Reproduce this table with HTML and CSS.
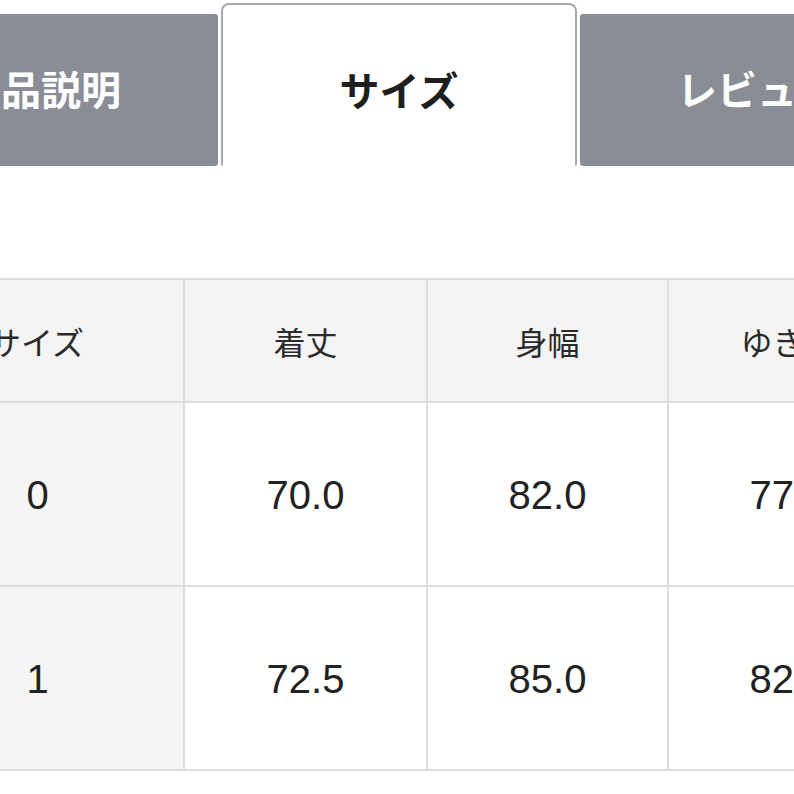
FILE: index.html
```html
<!DOCTYPE html>
<html lang="ja">
<head>
<meta charset="utf-8">
<link rel="stylesheet" href="styles.css">
</head>
<body>
<div class="page">
  <div class="tabs">
    <div class="tab">商品説明</div>
    <div class="tab active">サイズ</div>
    <div class="tab">レビュー</div>
  </div>
  <div class="size-table">
    <div class="cell head">サイズ</div>
    <div class="cell head">着丈</div>
    <div class="cell head">身幅</div>
    <div class="cell head">ゆき丈</div>

    <div class="cell label num">0</div>
    <div class="cell num">70.0</div>
    <div class="cell num">82.0</div>
    <div class="cell num">77.0</div>

    <div class="cell label num">1</div>
    <div class="cell num">72.5</div>
    <div class="cell num">85.0</div>
    <div class="cell num">82.0</div>
  </div>
</div>
</body>
</html>
```

FILE: styles.css
```css
html, body {
  margin: 0;
  padding: 0;
  background: #ffffff;
  overflow: hidden;
}

.page {
  width: 794px;
  height: 794px;
  overflow: hidden;
  font-family: "Noto Sans CJK JP", "Noto Sans", sans-serif;
}

.tabs {
  display: flex;
  align-items: flex-end;
  gap: 3px;
  height: 166px;
  margin-left: -136px;
}

.tab {
  box-sizing: border-box;
  width: 354px;
  height: 152px;
  flex: none;
  background: #8a8d96;
  color: #ffffff;
  font-size: 40px;
  font-weight: 700;
  display: flex;
  align-items: center;
  justify-content: center;
  padding-bottom: 4px;
  border-radius: 3px;
}

.tab.active {
  width: 356px;
  height: 163px;
  background: #ffffff;
  color: #1e1e1e;
  border: 2px solid #a8a9ad;
  border-bottom: none;
  border-radius: 8px 8px 2px 2px;
  padding-bottom: 0;
  padding-top: 6px;
}

.size-table {
  display: grid;
  grid-template-columns: 293px 241px 239px 239px;
  grid-template-rows: 121px 182px 182px;
  gap: 2px;
  padding: 2px;
  background: #dcdde0;
  width: max-content;
  margin-top: 112px;
  margin-left: -112px;
}

.cell {
  display: flex;
  align-items: center;
  justify-content: center;
  background: #ffffff;
  color: #222222;
}

.cell.head {
  background: #f4f4f5;
  font-size: 32px;
  color: #2a2a2a;
  padding-top: 1px;
}

.cell.label {
  background: #f5f5f6;
  padding-left: 2px;
}

.num {
  font-family: "Liberation Sans", Arial, sans-serif;
  font-size: 40px;
  padding-top: 2px;
}
```
